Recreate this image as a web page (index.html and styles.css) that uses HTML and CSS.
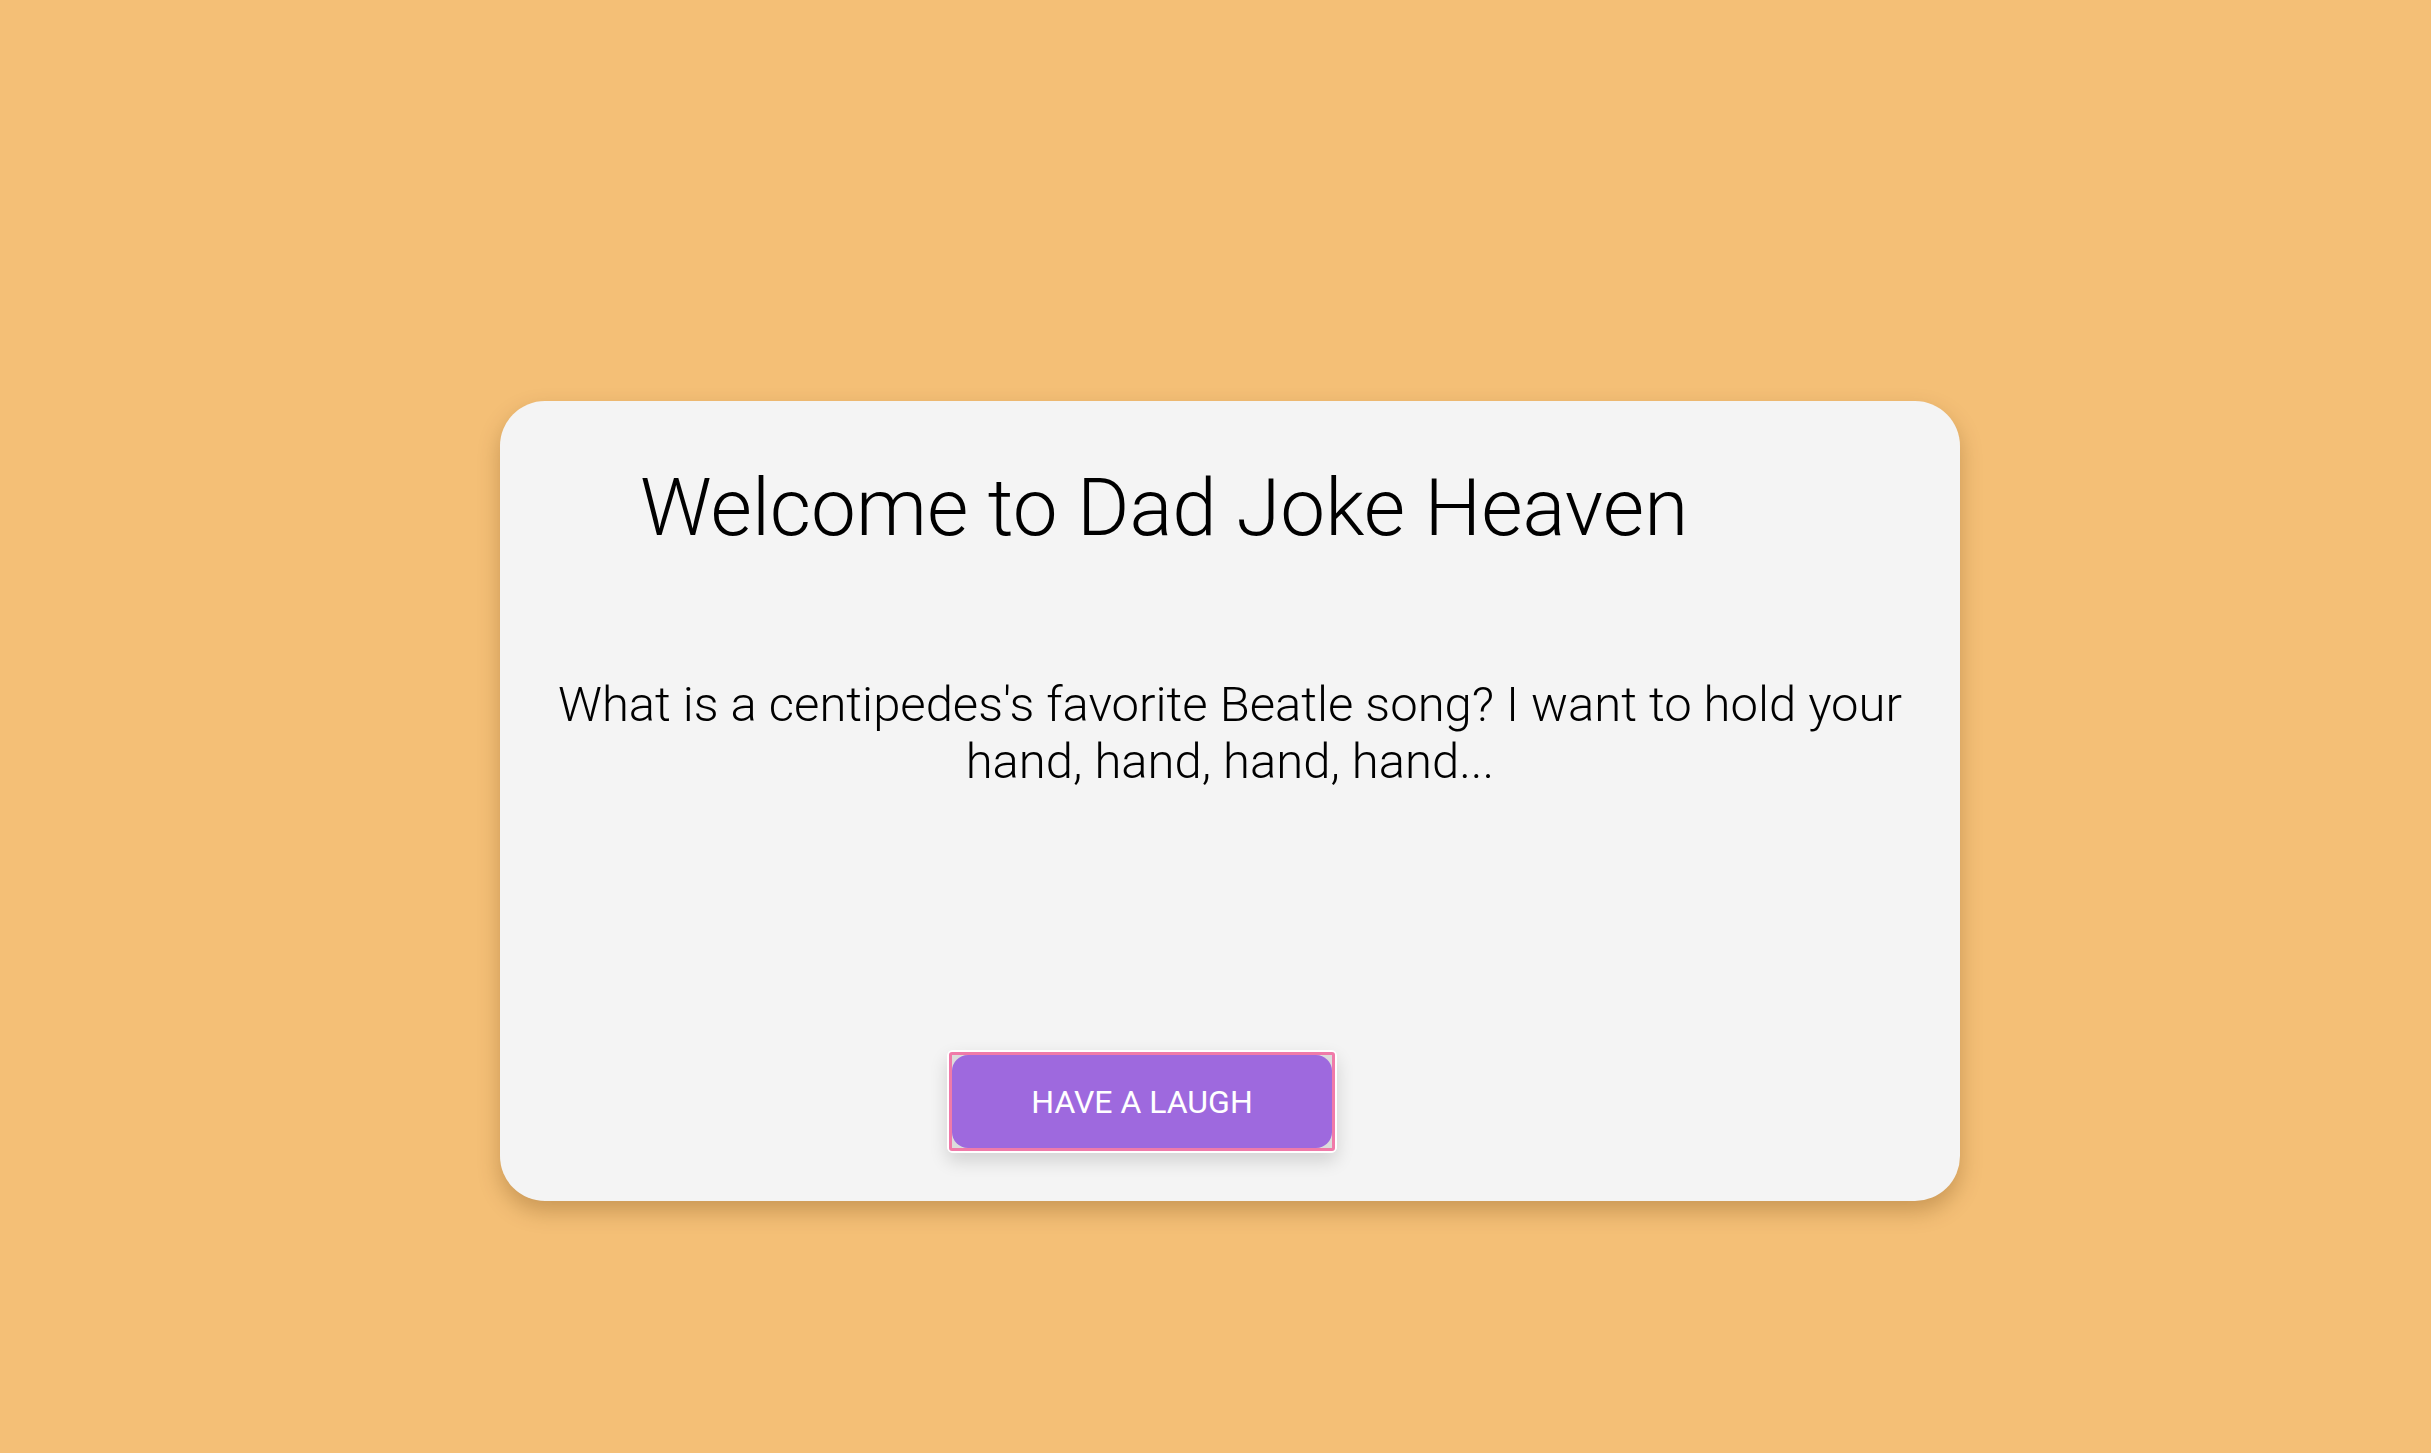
FILE: index.html
```html
<!DOCTYPE html>
<html>
<head>
<meta charset="utf-8">
<link rel="stylesheet" href="styles.css">
</head>
<body>
<main class="page">
  <section class="card">
    <h1 class="title">Welcome to Dad Joke Heaven</h1>
    <p class="joke">What is a centipedes's favorite Beatle song? I want to hold your hand, hand, hand, hand...</p>
    <div class="actions">
      <div class="btn-ring">
        <button class="btn"><span class="btn-face">HAVE A LAUGH</span></button>
      </div>
    </div>
  </section>
</main>
</body>
</html>
```

FILE: styles.css
```css
html, body {
  margin: 0;
  padding: 0;
  background: #f4bf76;
  height: 100%;
}
.page {
  padding-top: 401px;
  padding-left: 500px;
  box-sizing: border-box;
  min-height: 100vh;
}
.card {
  width: 1460px;
  height: 800px;
  box-sizing: border-box;
  background: #f4f4f4;
  border-radius: 45px;
  box-shadow: 0 10px 22px rgba(90, 50, 0, 0.28);
  display: flex;
  flex-direction: column;
  padding: 60px 40px 0 40px;
  font-family: Roboto, "Liberation Sans", sans-serif;
  color: #000;
}
.title {
  margin: 0 0 0 100px;
  font-weight: 300;
  font-size: 80px;
  line-height: 94px;
}
.joke {
  margin: 121px 0 0 0;
  font-weight: 300;
  font-size: 49px;
  line-height: 57px;
  text-align: center;
}
.actions {
  margin-top: 260px;
  padding-left: 407px;
  display: flex;
}
.btn-ring {
  border: 2px solid #fff;
  border-radius: 6px;
  box-shadow: 0 8px 18px rgba(0, 0, 0, 0.14);
  display: flex;
}
.btn {
  border: 3px solid #f07aa9;
  border-radius: 3px;
  background: #dcdcdc;
  padding: 0;
  margin: 0;
  display: flex;
  cursor: pointer;
}
.btn-face {
  display: flex;
  align-items: center;
  justify-content: center;
  width: 380px;
  height: 93px;
  background: #9e69de;
  border-radius: 16px;
  color: #fff;
  font-family: Roboto, "Liberation Sans", sans-serif;
  font-size: 32px;
  font-weight: 400;
}
```
